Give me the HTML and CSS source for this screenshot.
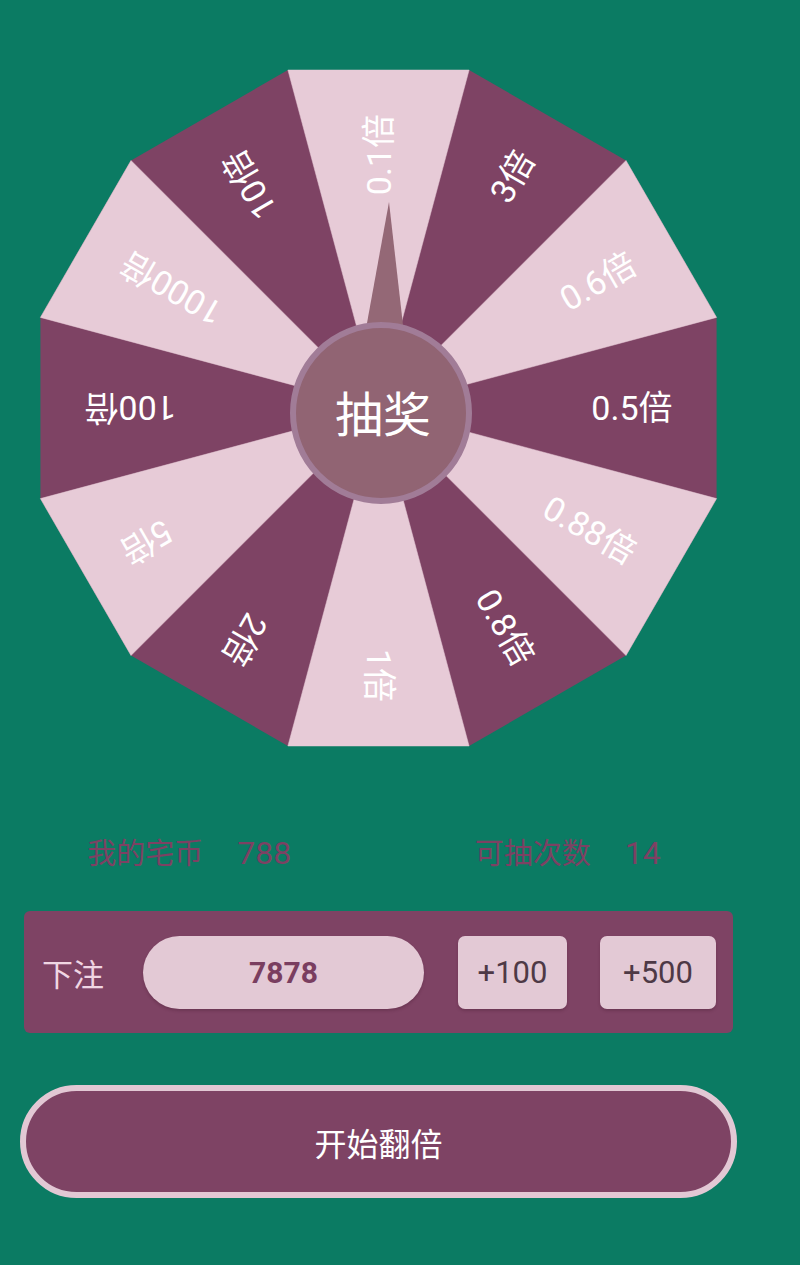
FILE: index.html
```html
<!DOCTYPE html>
<html lang="zh">
<head>
<meta charset="utf-8">
<title>转盘</title>
<link rel="stylesheet" href="styles.css">
</head>
<body>
<div class="page">
  <svg class="wheel" viewBox="0 0 757 790" xmlns="http://www.w3.org/2000/svg">
    <polygon class="dark" points="287.9,70 469.1,70 626,160.5 716.6,317.4 716.6,498.6 626,655.5 469.1,746 287.9,746 131,655.5 40.4,498.6 40.4,317.4 131,160.5"/>
    <polygon class="light" points="378.5,408 287.9,70 469.1,70"/>
    <polygon class="light" points="378.5,408 626,160.5 716.6,317.4"/>
    <polygon class="light" points="378.5,408 716.6,498.6 626,655.5"/>
    <polygon class="light" points="378.5,408 469.1,746 287.9,746"/>
    <polygon class="light" points="378.5,408 131,655.5 40.4,498.6"/>
    <polygon class="light" points="378.5,408 40.4,317.4 131,160.5"/>
    <g class="lbls">
      <text x="672.5" y="408" transform="rotate(-90 378.5 408)">0.1倍</text>
      <text x="672.5" y="408" transform="rotate(-60 378.5 408)">3倍</text>
      <text x="672.5" y="408" transform="rotate(-30 378.5 408)">0.6倍</text>
      <text x="672.5" y="408" transform="rotate(0 378.5 408)">0.5倍</text>
      <text x="672.5" y="408" transform="rotate(30 378.5 408)">0.88倍</text>
      <text x="672.5" y="408" transform="rotate(60 378.5 408)">0.8倍</text>
      <text x="672.5" y="408" transform="rotate(90 378.5 408)">1倍</text>
      <text x="672.5" y="408" transform="rotate(120 378.5 408)">2倍</text>
      <text x="672.5" y="408" transform="rotate(150 378.5 408)">5倍</text>
      <text x="672.5" y="408" transform="rotate(180 378.5 408)">100倍</text>
      <text x="672.5" y="408" transform="rotate(210 378.5 408)">1000倍</text>
      <text x="672.5" y="408" transform="rotate(240 378.5 408)">10倍</text>
    </g>
    <polygon class="pointer" points="365,334 404,334 389,202"/>
    <circle class="hub" cx="381" cy="413" r="88"/>
    <text class="hubtext" x="383" y="411">抽奖</text>
  </svg>

  <div class="stats">
    <div class="stat">我的宅币<span class="num">788</span></div>
    <div class="stat">可抽次数<span class="num">14</span></div>
  </div>

  <div class="panel">
    <div class="label">下注</div>
    <div class="pill">7878</div>
    <div class="add add1">+100</div>
    <div class="add add2">+500</div>
  </div>

  <div class="start">开始翻倍</div>
</div>
</body>
</html>
```
FILE: styles.css
```css
html, body {
  margin: 0;
  padding: 0;
  background: #0B7B63;
}
body {
  font-family: Roboto, "Noto Sans CJK SC", sans-serif;
  height: 1265px;
  overflow: hidden;
}
.page {
  width: 757px;
}
.wheel {
  display: block;
  width: 757px;
  height: 790px;
}
.dark {
  fill: #7E4364;
}
.light {
  fill: #E7CBD7;
  stroke: #E7CBD7;
  stroke-width: 0.5;
}
.lbls text {
  fill: #ffffff;
  font-family: Roboto, "Noto Sans CJK SC", sans-serif;
  font-size: 34px;
  text-anchor: end;
  dominant-baseline: central;
}
.pointer {
  fill: #946876;
}
.hub {
  fill: #916473;
  stroke: #A17C97;
  stroke-width: 6;
}
.hubtext {
  fill: #ffffff;
  font-family: "Noto Sans CJK SC", sans-serif;
  font-size: 48px;
  text-anchor: middle;
  dominant-baseline: central;
}
.stats {
  display: flex;
  margin-top: 43px;
  height: 40px;
  line-height: 40px;
  font-size: 29px;
  color: #7D4163;
}
.stat {
  flex: 1;
  text-align: center;
  white-space: nowrap;
}
.num {
  font-size: 32px;
  margin-left: 34px;
}
.panel {
  margin: 38px 24px 0 24px;
  height: 122px;
  background: #7E4364;
  border-radius: 6px;
  display: flex;
  align-items: center;
  padding: 0 17px 0 18px;
}
.label {
  font-size: 31px;
  color: #F0D6E3;
  width: 65px;
  margin-right: 36px;
  white-space: nowrap;
}
.pill {
  width: 281px;
  height: 73px;
  border-radius: 37px;
  background: #E3C9D5;
  display: flex;
  align-items: center;
  justify-content: center;
  font-weight: 700;
  font-size: 30px;
  color: #7A3E60;
  box-shadow: 0 2px 3px rgba(60, 20, 40, 0.25);
}
.add {
  height: 73px;
  border-radius: 7px;
  background: #E3C9D5;
  color: #4E3946;
  font-size: 31px;
  display: flex;
  align-items: center;
  justify-content: center;
  box-shadow: 0 2px 3px rgba(60, 20, 40, 0.25);
}
.add1 {
  width: 109px;
  margin-left: 34px;
}
.add2 {
  width: 116px;
  margin-left: 33px;
}
.start {
  margin: 52px 0 0 20px;
  width: 717px;
  height: 113px;
  box-sizing: border-box;
  border: 6px solid #E2C8D4;
  border-radius: 57px;
  background: #7E4364;
  color: #ffffff;
  font-size: 32px;
  display: flex;
  align-items: center;
  justify-content: center;
}
```
